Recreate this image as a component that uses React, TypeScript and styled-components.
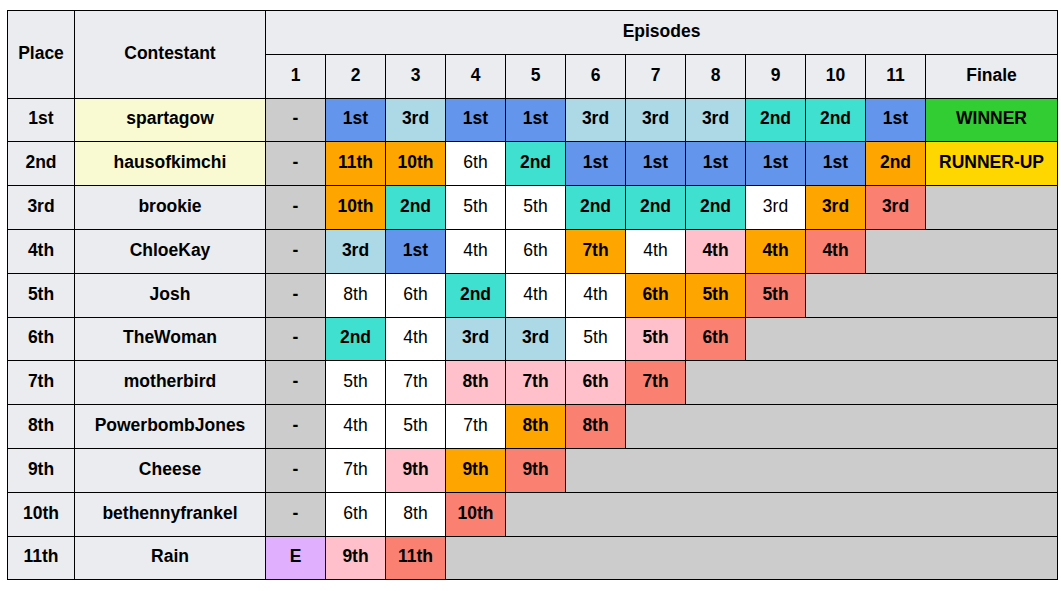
import React from "react"
import styled, { createGlobalStyle } from "styled-components"

const GlobalStyle = createGlobalStyle`
    body {
        margin: 0;
        background: #fff;
        font-family: "Liberation Sans", Arial, sans-serif;
    }
`

// colour per result code
const colours: Record<string, string> = {
    B: "#6495ed",
    L: "#add8e6",
    T: "#40e0d0",
    O: "#ffa500",
    P: "#ffc0cb",
    S: "#fa8072",
    W: "#ffffff",
    G: "#cccccc",
    E: "#e0b0ff",
    V: "#32cd32",
    Y: "#ffd700",
}

const rows = [
    { place: "1st", name: "spartagow", top: true, res: "-G 1stB 3rdL 1stB 1stB 3rdL 3rdL 3rdL 2ndT 2ndT 1stB WINNERV" },
    { place: "2nd", name: "hausofkimchi", top: true, res: "-G 11thO 10thO 6thW 2ndT 1stB 1stB 1stB 1stB 1stB 2ndO RUNNER-UPY" },
    { place: "3rd", name: "brookie", res: "-G 10thO 2ndT 5thW 5thW 2ndT 2ndT 2ndT 3rdW 3rdO 3rdS" },
    { place: "4th", name: "ChloeKay", res: "-G 3rdL 1stB 4thW 6thW 7thO 4thW 4thP 4thO 4thS" },
    { place: "5th", name: "Josh", res: "-G 8thW 6thW 2ndT 4thW 4thW 6thO 5thO 5thS" },
    { place: "6th", name: "TheWoman", res: "-G 2ndT 4thW 3rdL 3rdL 5thW 5thP 6thS" },
    { place: "7th", name: "motherbird", res: "-G 5thW 7thW 8thP 7thP 6thP 7thS" },
    { place: "8th", name: "PowerbombJones", res: "-G 4thW 5thW 7thW 8thO 8thS" },
    { place: "9th", name: "Cheese", res: "-G 7thW 9thP 9thO 9thS" },
    { place: "10th", name: "bethennyfrankel", res: "-G 6thW 8thW 10thS" },
    { place: "11th", name: "Rain", res: "EE 9thP 11thS" },
]

const TOTAL = 12

export default function App() {
    return (
        <Page>
            <GlobalStyle />
            <Table>
                <colgroup>
                    <col style={{ width: 67 }} />
                    <col style={{ width: 191 }} />
                    {Array.from({ length: 11 }).map((_, i) => <col key={i} style={{ width: 60 }} />)}
                    <col style={{ width: 132 }} />
                </colgroup>
                <thead>
                    <Row>
                        <HeadCell rowSpan={2}>Place</HeadCell>
                        <HeadCell rowSpan={2}>Contestant</HeadCell>
                        <HeadCell colSpan={TOTAL}>Episodes</HeadCell>
                    </Row>
                    <Row>
                        {Array.from({ length: 11 }).map((_, i) => <HeadCell key={i}>{i + 1}</HeadCell>)}
                        <HeadCell>Finale</HeadCell>
                    </Row>
                </thead>
                <tbody>
                    {rows.map(r => {
                        const res = r.res.split(" ")
                        return (
                            <Row key={r.place}>
                                <HeadCell>{r.place}</HeadCell>
                                <NameCell $top={!!r.top}>{r.name}</NameCell>
                                {res.map((c, i) => {
                                    const key = c.slice(-1)
                                    return (
                                        <Cell key={i} $bg={colours[key]} $plain={key === "W"}>
                                            {c.slice(0, -1)}
                                        </Cell>
                                    )
                                })}
                                {res.length < TOTAL && <Cell $bg={colours.G} colSpan={TOTAL - res.length} />}
                            </Row>
                        )
                    })}
                </tbody>
            </Table>
        </Page>
    )
}

const Page = styled.div`
    padding: 10px 0 0 7px;
`

const Table = styled.table`
    border-collapse: collapse;
    table-layout: fixed;
    width: 1050px;
    color: #000;
    font-size: 17.5px;
`

const Row = styled.tr`
    height: 43.8px;
`

const HeadCell = styled.th`
    border: 1px solid #000;
    background: #eaecf0;
    font-weight: bold;
    text-align: center;
    padding: 0 0 2px;
`

const NameCell = styled.td<{ $top: boolean }>`
    border: 1px solid #000;
    background: ${p => (p.$top ? "#fafad2" : "#eaecf0")};
    font-weight: bold;
    text-align: center;
    padding: 0 0 2px;
`

const Cell = styled.td<{ $bg: string; $plain?: boolean }>`
    border: 1px solid #000;
    background: ${p => p.$bg};
    font-weight: ${p => (p.$plain ? "normal" : "bold")};
    text-align: center;
    padding: 0 0 2px;
`
